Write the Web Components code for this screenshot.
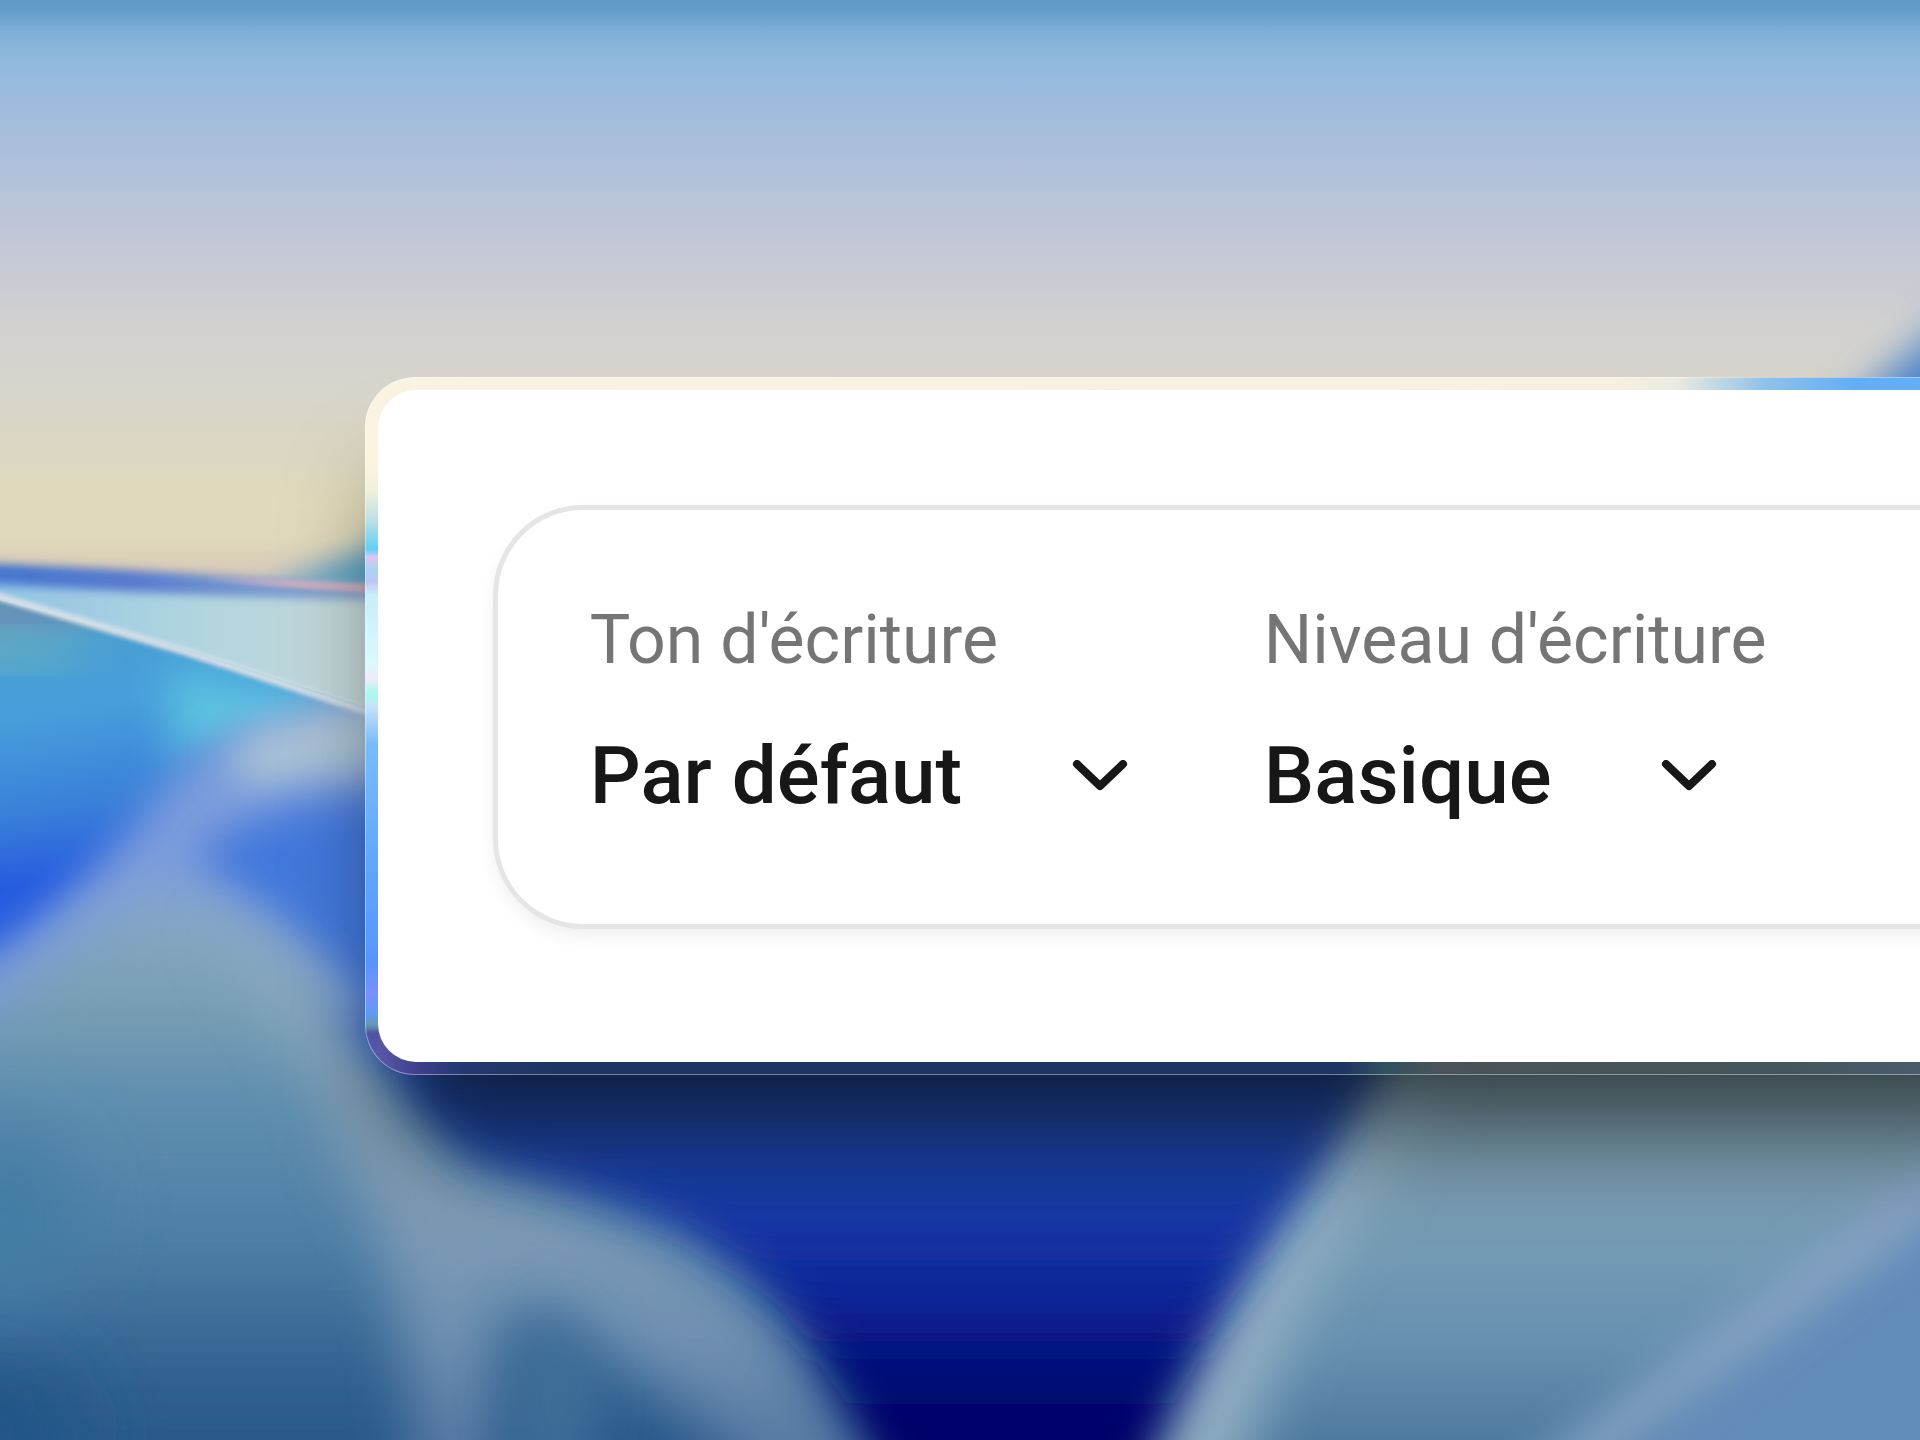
<!DOCTYPE html>
<html lang="fr">
<head>
<meta charset="UTF-8">
<meta name="viewport" content="width=device-width, initial-scale=1.0">
<title>Réglages d'écriture</title>
<style>
    body {
        margin: 0;
        font-family: Roboto, "Liberation Sans", sans-serif;
        color: #171717;
    }
</style>
</head>
<body>
    <writing-page>
        <glass-card>
            <option-bar>
                <tone-select name="ton" label="Ton d'écriture" value="Par défaut"></tone-select>
                <tone-select name="niveau" label="Niveau d'écriture" value="Basique"></tone-select>
            </option-bar>
        </glass-card>
    </writing-page>

<script>
class baseElement extends HTMLElement {
    constructor() {
        super()
        this.attachShadow({mode: "open"});
    }

    render(){
        const TEMPLATE = document.createElement('template');
        TEMPLATE.innerHTML = this.getStyles() + this.getTemplate();
        this.shadowRoot.replaceChildren(TEMPLATE.content.cloneNode(true));
    }

    connectedCallback(){
        this.render();
    }
}

// abstract wallpaper, stretched behind the page
class wallPaper extends baseElement {
    getTemplate(){
        return /*html*/ `
            <svg viewBox="0 0 1920 1440" preserveAspectRatio="none" aria-hidden="true">
                <defs>
                    <linearGradient id="sky" x2="0" y2="600" gradientUnits="userSpaceOnUse">
                        <stop offset="0" stop-color="#5f99c4"/>
                        <stop offset=".02" stop-color="#679ec9"/>
                        <stop offset=".045" stop-color="#78acd5"/>
                        <stop offset=".08" stop-color="#8bb6db"/>
                        <stop offset=".13" stop-color="#97badf"/>
                        <stop offset=".23" stop-color="#a8bedb"/>
                        <stop offset=".32" stop-color="#b6c3d9"/>
                        <stop offset=".38" stop-color="#c0c6d8"/>
                        <stop offset=".48" stop-color="#cbccd3"/>
                        <stop offset=".54" stop-color="#d2d1d0"/>
                        <stop offset=".65" stop-color="#d8d5cb"/>
                        <stop offset=".77" stop-color="#dcd7c1"/>
                        <stop offset=".84" stop-color="#e1dbba"/>
                        <stop offset=".9" stop-color="#e0d8ba"/>
                        <stop offset=".95" stop-color="#d8cbbb"/>
                    </linearGradient>
                    <linearGradient id="band" x2="380" y2="0" gradientUnits="userSpaceOnUse">
                        <stop offset="0" stop-color="#4676cd"/>
                        <stop offset=".35" stop-color="#587bcd"/>
                        <stop offset=".65" stop-color="#7396cf"/>
                        <stop offset="1" stop-color="#8ba9cb"/>
                    </linearGradient>
                    <linearGradient id="flare" x1="200" x2="400" y1="0" y2="0" gradientUnits="userSpaceOnUse">
                        <stop offset="0" stop-color="#ccaec4" stop-opacity="0"/>
                        <stop offset=".5" stop-color="#ccaec4"/>
                        <stop offset="1" stop-color="#d0b0c0"/>
                    </linearGradient>
                    <linearGradient id="wedge" x2="380" y2="0" gradientUnits="userSpaceOnUse">
                        <stop offset="0" stop-color="#92c4e4"/>
                        <stop offset=".5" stop-color="#b0d5df"/>
                        <stop offset="1" stop-color="#c8d8d8"/>
                    </linearGradient>
                    <linearGradient id="sea" x1="0" y1="610" x2="50" y2="920" gradientUnits="userSpaceOnUse">
                        <stop offset="0" stop-color="#4ba1cd"/>
                        <stop offset=".35" stop-color="#479edb"/>
                        <stop offset=".65" stop-color="#3a80d9"/>
                        <stop offset=".88" stop-color="#255bdf"/>
                        <stop offset="1" stop-color="#255bdf"/>
                    </linearGradient>
                    <linearGradient id="hill" x1="0" y1="880" x2="0" y2="1440" gradientUnits="userSpaceOnUse">
                        <stop offset="0" stop-color="#8eacc9"/>
                        <stop offset=".2" stop-color="#7ba0b4"/>
                        <stop offset=".4" stop-color="#5f8fb0"/>
                        <stop offset=".65" stop-color="#4d7ea5"/>
                        <stop offset=".9" stop-color="#2f608e"/>
                        <stop offset="1" stop-color="#2a598b"/>
                    </linearGradient>
                    <linearGradient id="ridge" x1="0" y1="900" x2="0" y2="1440" gradientUnits="userSpaceOnUse">
                        <stop offset="0" stop-color="#93b2c9"/>
                        <stop offset=".35" stop-color="#89a3b8"/>
                        <stop offset=".65" stop-color="#7998b4"/>
                        <stop offset=".82" stop-color="#7090b2"/>
                        <stop offset="1" stop-color="#5a7aa4"/>
                    </linearGradient>
                    <linearGradient id="deep" x1="0" y1="1050" x2="0" y2="1440" gradientUnits="userSpaceOnUse">
                        <stop offset="0" stop-color="#234d9c"/>
                        <stop offset=".43" stop-color="#1638a6"/>
                        <stop offset=".63" stop-color="#0e2597"/>
                        <stop offset=".82" stop-color="#020d78"/>
                        <stop offset="1" stop-color="#000065"/>
                    </linearGradient>
                    <linearGradient id="slope" x1="0" y1="1050" x2="0" y2="1440" gradientUnits="userSpaceOnUse">
                        <stop offset="0" stop-color="#85a3ad"/>
                        <stop offset=".55" stop-color="#7299b4"/>
                        <stop offset=".75" stop-color="#6790b0"/>
                        <stop offset="1" stop-color="#4e7ba1"/>
                    </linearGradient>
                    <filter id="b2" x="-20%" y="-50%" width="140%" height="200%"><feGaussianBlur stdDeviation="2"/></filter>
                    <filter id="b5" x="-20%" y="-50%" width="140%" height="200%"><feGaussianBlur stdDeviation="5"/></filter>
                    <filter id="b14" x="-50%" y="-80%" width="200%" height="260%"><feGaussianBlur stdDeviation="14"/></filter>
                    <filter id="b20" x="-50%" y="-80%" width="200%" height="260%"><feGaussianBlur stdDeviation="20"/></filter>
                    <filter id="b28" x="-80%" y="-80%" width="260%" height="260%"><feGaussianBlur stdDeviation="28"/></filter>
                    <filter id="b40" x="-80%" y="-80%" width="260%" height="260%"><feGaussianBlur stdDeviation="40"/></filter>
                </defs>

                <rect width="1920" height="1440" fill="url(#sky)"/>
                <path d="M1800 450 L1960 310 V450 Z" fill="#4a82ca" filter="url(#b20)"/>
                <path d="M260 592 L440 520 V600 Z" fill="#58a4c8" filter="url(#b14)"/>

                <!-- sea -->
                <path d="M-20 590 L500 740 V1440 H-20 Z" fill="url(#sea)"/>
                <ellipse cx="-10" cy="610" rx="120" ry="20" fill="#6b90b4" filter="url(#b14)"/>
                <ellipse cx="-30" cy="650" rx="120" ry="10" fill="#7ab8b4" filter="url(#b20)"/>
                <path d="M170 670 L340 700 L300 730 L170 755 Z" fill="#5cc4e0" filter="url(#b20)"/>

                <!-- left hill -->
                <path d="M-80 1000 L20 935 Q110 860 165 785 Q210 732 280 722 L420 690 V1000 L-80 1100 Z" fill="#7b9cdc" filter="url(#b20)"/>
                <path d="M230 745 Q290 712 440 680 V770 L240 785 Z" fill="#adc4d6" filter="url(#b20)"/>
                <path d="M195 860 Q245 800 420 792 V1060 Q330 960 195 860 Z" fill="#4378dc" filter="url(#b20)"/>
                <path d="M-80 1060 L60 955 Q140 880 190 895 Q300 930 350 1040 L400 1100 V1500 H-80 Z" fill="url(#hill)" filter="url(#b28)"/>
                <path d="M-80 1100 H1000 V1540 H-80 Z" fill="url(#hill)" filter="url(#b28)"/>
                <path d="M210 930 Q300 950 360 1060 L460 1170 Q720 1230 790 1340 L900 1520 H790 Q650 1350 500 1300 L490 1520 H420 Q410 1280 340 1150 Q310 1030 210 930 Z" fill="url(#ridge)" filter="url(#b28)"/>
                <ellipse cx="555" cy="1400" rx="40" ry="90" fill="#3f7099" filter="url(#b28)"/>
                <ellipse cx="-20" cy="1430" rx="100" ry="70" fill="#225488" filter="url(#b40)"/>
                <ellipse cx="0" cy="1220" rx="80" ry="90" fill="#457ba4" filter="url(#b40)"/>

                <!-- right slope -->
                <path d="M1100 1000 H2000 V1500 H1050 Z" fill="url(#slope)"/>
                <path d="M1400 1060 L1440 1080 Q1310 1250 1230 1500 L1140 1500 Q1230 1250 1400 1060 Z" fill="#90aec2" filter="url(#b28)"/>
                <path d="M1980 1170 L1560 1500 H2040 V1170 Z" fill="#628cba" filter="url(#b20)"/>
                <path d="M1980 1130 L1500 1490 H1570 L1980 1180 Z" fill="#86a2c4" filter="url(#b20)"/>

                <!-- valley -->
                <path d="M395 1000 Q405 1125 485 1165 Q600 1195 680 1230 Q760 1275 812 1345 L915 1520 H1120 Q1210 1310 1310 1185 L1405 1030 V1000 Z" fill="url(#deep)" filter="url(#b20)"/>

                <!-- horizon -->
                <path d="M-20 566 Q150 574 400 592 V718 L187 650 L-20 595 Z" fill="url(#wedge)"/>
                <path d="M-20 563 Q150 569 400 588 V600 Q200 598 -20 583 Z" fill="url(#band)" filter="url(#b5)"/>
                <path d="M200 578 L400 590" stroke="url(#flare)" stroke-width="8" fill="none" filter="url(#b2)"/>
                <path d="M-10 594 L187 652 L400 722" stroke="#d3dfe7" stroke-width="8" fill="none" filter="url(#b2)"/>
            </svg>
        `
    }

    getStyles(){
        return /*html*/ `
            <style>
                :host {
                    display: block;
                    overflow: hidden;
                }
                svg {
                    display: block;
                    width: 100%;
                    height: 100%;
                }
            </style>
        `
    }
}

class writingPage extends baseElement {
    getTemplate(){
        return /*html*/ `
            <wall-paper></wall-paper>
            <main><slot></slot></main>
        `
    }

    getStyles(){
        return /*html*/ `
            <style>
                :host {
                    display: grid;
                    height: 100vh;
                    overflow: hidden;
                }
                wall-paper, main {
                    grid-area: 1 / 1;
                    min-width: 0;
                    min-height: 0;
                }
                main {
                    display: grid;
                    align-items: center;
                    padding: 12px 0 0 19%;
                    z-index: 1;
                }
            </style>
        `
    }
}

class glassCard extends baseElement {
    getTemplate(){
        return /*html*/ `
            <section><slot></slot></section>
        `
    }

    getStyles(){
        return /*html*/ `
            <style>
                :host {
                    display: block;
                    /* the card runs out of the window on the right */
                    margin-right: -240px;
                    padding: 12px;
                    border: 1px solid rgba(255, 255, 255, .4);
                    border-radius: 50px;
                    background:
                        linear-gradient(to bottom, #faf3e2 0, #faf4df 90px, #f0f0db 114px, #b8e0e8 145px, #5fd0f6 172px, #e0c4f2 180px, #a8d4f0 192px, #c0c4f4 204px, #c8eefc 218px, #dafafc 287px, #f2e8fa 301px, #a8fbf0 316px, #c4e2fa 330px, #78bcfd 367px, #60a8fd 482px, #5794fd 587px, #7a90fd 616px, #5f9af8 636px, #659ab0 648px, #5353a4 656px, #5a5aaa 100%) 0 0 / 13px 100% no-repeat border-box,
                        linear-gradient(to right, #faf3e2 0, #f7f0e0 1250px, #ecebe0 1310px, #8fc2ea 1400px, #62aef9 1490px) 0 0 / 100% 50px no-repeat border-box,
                        linear-gradient(to right, #5f62ae 0, #40408f 50px, #22386f 100px, #1e3562 200px, #1e3562 980px, #2c5060 1015px, #4a5459 1070px, #42555a 1400px, #4a5c6c 1555px) 0 100% / 100% 50px no-repeat border-box;
                    box-shadow: 0 80px 100px -30px rgba(0, 0, 0, .62);
                }
                section {
                    padding: 115px 0 133px 115px;
                    border-radius: 38px;
                    background: #fff;
                }
            </style>
        `
    }
}

class optionBar extends baseElement {
    getTemplate(){
        return /*html*/ `
            <form><slot></slot></form>
        `
    }

    getStyles(){
        return /*html*/ `
            <style>
                :host {
                    display: block;
                }
                form {
                    display: flex;
                    gap: 136px;
                    padding: 90px 92px 100px;
                    border: 5px solid #e5e5e5;
                    border-radius: 90px;
                    box-shadow: 0 8px 16px rgba(0, 0, 0, .06);
                }
            </style>
        `
    }
}

class toneSelect extends baseElement {
    getTemplate(){
        const NAME = this.getAttribute('name');
        return /*html*/ `
            <label for="${NAME}">${this.getAttribute('label')}</label>
            <div>
                <select id="${NAME}" name="${NAME}">
                    <option selected>${this.getAttribute('value')}</option>
                </select>
                <svg viewBox="0 0 56 32" aria-hidden="true">
                    <path d="M5 4 L28 26 L51 4" fill="none" stroke="currentColor" stroke-width="8" stroke-linecap="round" stroke-linejoin="round"/>
                </svg>
            </div>
        `
    }

    getStyles(){
        return /*html*/ `
            <style>
                :host {
                    display: flex;
                    flex-direction: column;
                    align-items: flex-start;
                    gap: 48px;
                    white-space: nowrap;
                }
                label {
                    font-size: 68px;
                    line-height: 80px;
                    color: #757575;
                }
                div {
                    display: flex;
                    align-items: center;
                    gap: 109px;
                }
                select {
                    appearance: none;
                    margin: 0;
                    padding: 0;
                    border: 0;
                    background: none;
                    color: inherit;
                    font-family: inherit;
                    font-size: 80px;
                    font-weight: 500;
                    line-height: 96px;
                }
                svg {
                    width: 56px;
                    height: 32px;
                }
            </style>
        `
    }
}

customElements.define('wall-paper', wallPaper);
customElements.define('writing-page', writingPage);
customElements.define('glass-card', glassCard);
customElements.define('option-bar', optionBar);
customElements.define('tone-select', toneSelect);
</script>
</body>
</html>
